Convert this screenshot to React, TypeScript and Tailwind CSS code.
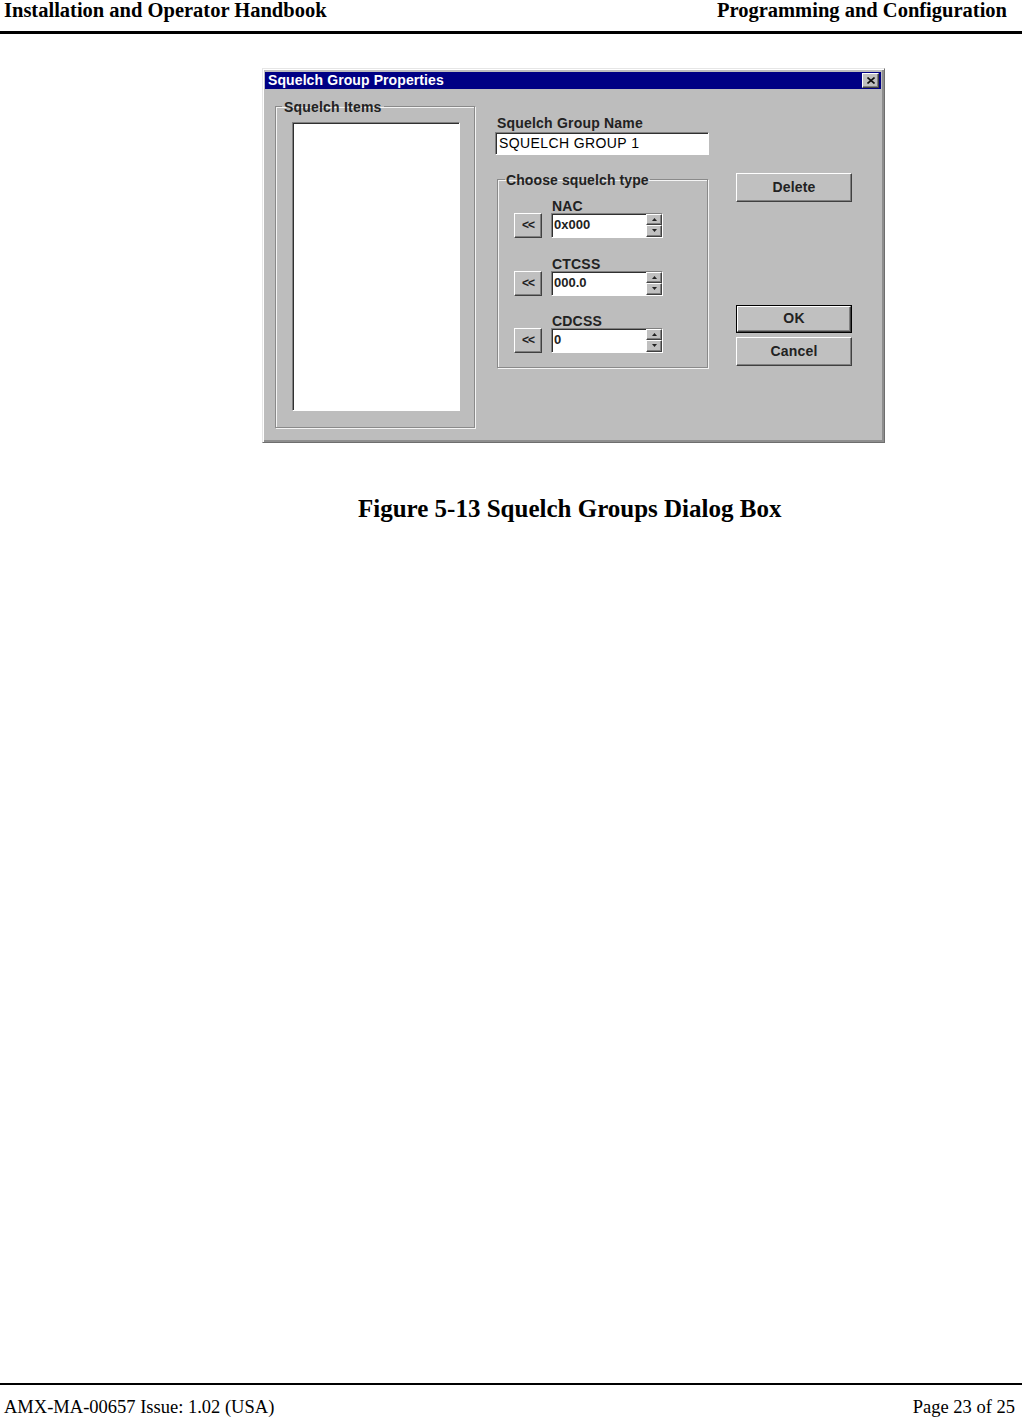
import React from 'react';

const serif = { fontFamily: '"Liberation Serif", "Times New Roman", serif' };
const sans = { fontFamily: '"Liberation Sans", Arial, sans-serif' };

const raised =
  'bg-[#c0c0c0] border border-t-white border-l-white border-r-[#404040] border-b-[#404040] shadow-[inset_-1px_-1px_0_#808080]';
const sunken =
  'border border-t-[#808080] border-l-[#808080] border-r-white border-b-white shadow-[inset_1px_1px_0_#303030]';
const etched =
  'border border-[#8a8a8a] shadow-[inset_1px_1px_0_#f4f4f4,1px_1px_0_#f4f4f4]';

function WinButton({ label, isDefault = false, h = 'h-[29px]' }: { label: string; isDefault?: boolean; h?: string }) {
  const btn = (
    <button
      className={`${raised} w-full ${isDefault ? 'h-full' : h} flex items-center justify-center text-[14px] font-bold tracking-[0.2px] text-[#222]`}
    >
      {label}
    </button>
  );
  if (isDefault) {
    return <div className={`w-[116px] ${h} border border-black`}>{btn}</div>;
  }
  return <div className="w-[116px]">{btn}</div>;
}

function Spinner() {
  return (
    <div className="w-[16px] flex flex-col">
      <div className={`${raised} flex-1 flex items-center justify-center`}>
        <svg width="5" height="3" viewBox="0 0 5 3">
          <path d="M2.5 0 L5 3 L0 3 Z" fill="#222" />
        </svg>
      </div>
      <div className={`${raised} flex-1 flex items-center justify-center`}>
        <svg width="5" height="3" viewBox="0 0 5 3">
          <path d="M0 0 L5 0 L2.5 3 Z" fill="#222" />
        </svg>
      </div>
    </div>
  );
}

function SquelchRow({ name, value, mt }: { name: string; value: string; mt: string }) {
  return (
    <div className={`flex items-end ${mt}`}>
      <button
        className={`${raised} ml-[16px] w-[28px] h-[25px] flex items-center justify-center text-[12px] font-bold tracking-[-1px] text-[#222]`}
      >
        &lt;&lt;
      </button>
      <div className="ml-[9px] flex flex-col">
        <div className="h-[14px] leading-[14px] ml-[1px] text-[14px] font-bold tracking-[0.2px] text-[#222]">{name}</div>
        <div className={`${sunken} w-[112px] h-[25px] flex bg-white`}>
          <div className="flex-1 flex items-center pl-[2px] text-[13px] font-bold text-[#222]">{value}</div>
          <Spinner />
        </div>
      </div>
    </div>
  );
}

function Dialog() {
  return (
    <div
      className="w-[623px] h-[375px] bg-[#bdbdbd] border border-t-[#e6e6e6] border-l-[#e6e6e6] border-r-[#6e6e6e] border-b-[#6e6e6e] shadow-[inset_1px_1px_0_#fff,inset_-2px_-2px_0_#8e8e8e] pt-[3px] pl-[2px]"
      style={sans}
    >
      {/* title bar */}
      <div className="w-[616px] h-[17px] bg-[#000084] flex items-center justify-between">
        <span className="pl-[3px] text-white text-[14px] font-bold tracking-[0.1px] leading-none">
          Squelch Group Properties
        </span>
        <div className={`${raised} mr-[2px] w-[17px] h-[15px] flex items-center justify-center`}>
          <svg width="8" height="7" viewBox="0 0 8 7">
            <path d="M0.5 0.5 L7.5 6.5 M7.5 0.5 L0.5 6.5" stroke="#111" strokeWidth="1.6" />
          </svg>
        </div>
      </div>

      <div className="flex items-start">
        {/* Squelch Items */}
        <fieldset className={`${etched} ml-[10px] mt-[11px] w-[200px] h-[328px]`}>
          <legend className="ml-[6px] px-[2px] h-[14px] leading-[14px] text-[14px] font-bold tracking-[0.2px] text-[#222]">
            Squelch Items
          </legend>
          <div className={`${sunken} ml-[16px] mt-[8px] w-[168px] h-[289px] bg-white`} />
        </fieldset>

        {/* middle column */}
        <div className="ml-[20px] mt-[27px] w-[214px] flex flex-col">
          <div className="ml-[2px] h-[14px] leading-[14px] text-[14px] font-bold tracking-[0.2px] text-[#222]">
            Squelch Group Name
          </div>
          <div className={`${sunken} mt-[2px] h-[23px] bg-white flex items-center pl-[3px] text-[14px] tracking-[0.4px] text-black`}>
            SQUELCH GROUP 1
          </div>

          <fieldset className={`${etched} ml-[2px] mt-[18px] w-[211px] h-[195px]`}>
            <legend className="ml-[7px] px-[1px] h-[14px] leading-[14px] text-[14px] font-bold tracking-[0.1px] text-[#222]">
              Choose squelch type
            </legend>
            <SquelchRow name="NAC" value="0x000" mt="mt-[12px]" />
            <SquelchRow name="CTCSS" value="000.0" mt="mt-[19px]" />
            <SquelchRow name="CDCSS" value="0" mt="mt-[18px]" />
          </fieldset>
        </div>

        {/* buttons */}
        <div className="ml-[27px] mt-[84px] flex flex-col">
          <WinButton label="Delete" />
          <div className="mt-[103px]">
            <WinButton label="OK" isDefault h="h-[28px]" />
          </div>
          <div className="mt-[4px]">
            <WinButton label="Cancel" />
          </div>
        </div>
      </div>
    </div>
  );
}

export default function App() {
  return (
    <div className="w-[1022px] h-[1417px] bg-white flex flex-col text-black overflow-hidden" style={serif}>
      <div className="flex justify-between items-start px-[4px] pr-[15px] text-[20.5px] font-bold leading-none">
        <span>Installation and Operator Handbook</span>
        <span>Programming and Configuration</span>
      </div>
      <div className="mt-[10px] h-[3px] bg-black" />

      <div className="ml-[262px] mt-[34px]">
        <Dialog />
      </div>

      <div className="ml-[358px] mt-[53px] text-[25px] font-bold leading-none">
        Figure 5-13 Squelch Groups Dialog Box
      </div>

      <div className="mt-auto">
        <div className="h-[2px] bg-black" />
        <div className="mt-[13px] pb-[1px] px-[4px] pr-[7px] flex justify-between text-[18.5px] leading-none">
          <span>AMX-MA-00657 Issue: 1.02 (USA)</span>
          <span>Page 23 of 25</span>
        </div>
      </div>
    </div>
  );
}
